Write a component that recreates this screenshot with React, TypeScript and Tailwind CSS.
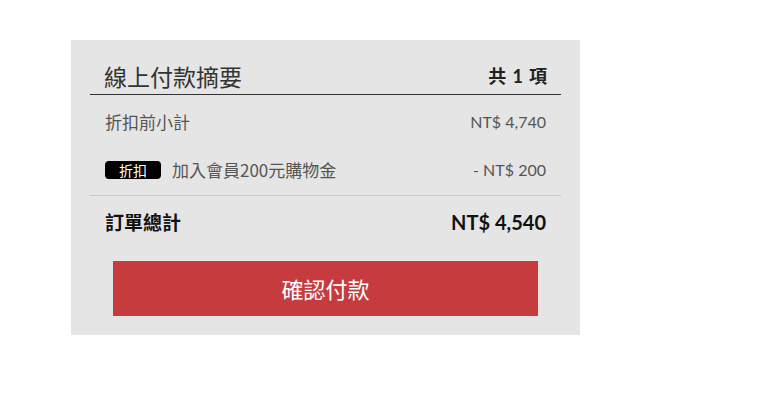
export default function App() {
  return (
    <div className="min-h-[402px] bg-white pt-[40px] pl-[71px]" style={{ fontFamily: '"Noto Sans CJK TC", "Noto Sans", sans-serif' }}>
      <div className="w-[509px] bg-[#e5e5e5] px-[19px] pb-[19px]">
        <div className="flex h-[55px] items-end justify-between border-b border-[#333] px-[14px] pb-[2px]">
          <span className="text-[23px] leading-[32px] text-[#333]">線上付款摘要</span>
          <span className="text-[18px] font-bold leading-[32px] text-[#222]">
            共 <span style={{ fontFamily: "Lato, sans-serif" }} className="px-[2px]">1</span> 項
          </span>
        </div>
        <div className="flex h-[53px] items-center justify-between px-[15px] pt-[1px] text-[17px] text-[#555]">
          <span>折扣前小計</span>
          <span style={{ fontFamily: "Lato, sans-serif" }} className="text-[16px] text-[#555]">NT$ 4,740</span>
        </div>
        <div className="flex h-[48px] items-center justify-between border-b border-[#c8c8c8] px-[15px] pb-[3px] text-[17px] text-[#555]">
          <span className="flex items-center">
            <span className="mr-[11px] rounded-[4px] bg-black px-[14px] text-[14px] leading-[18px] text-white">折扣</span>
            加入會員200元購物金
          </span>
          <span style={{ fontFamily: "Lato, sans-serif" }} className="text-[16px] text-[#555]">- NT$ 200</span>
        </div>
        <div className="flex h-[52px] items-center justify-between px-[15px] text-[19px] font-bold text-[#111]">
          <span>訂單總計</span>
          <span style={{ fontFamily: "Lato, sans-serif" }} className="text-[20px]">NT$ 4,540</span>
        </div>
        <div className="px-[23px] pt-[13px]">
          <button className="flex h-[55px] w-full items-center justify-center bg-[#c63c3e] text-[22px] text-white">確認付款</button>
        </div>
      </div>
    </div>
  );
}
